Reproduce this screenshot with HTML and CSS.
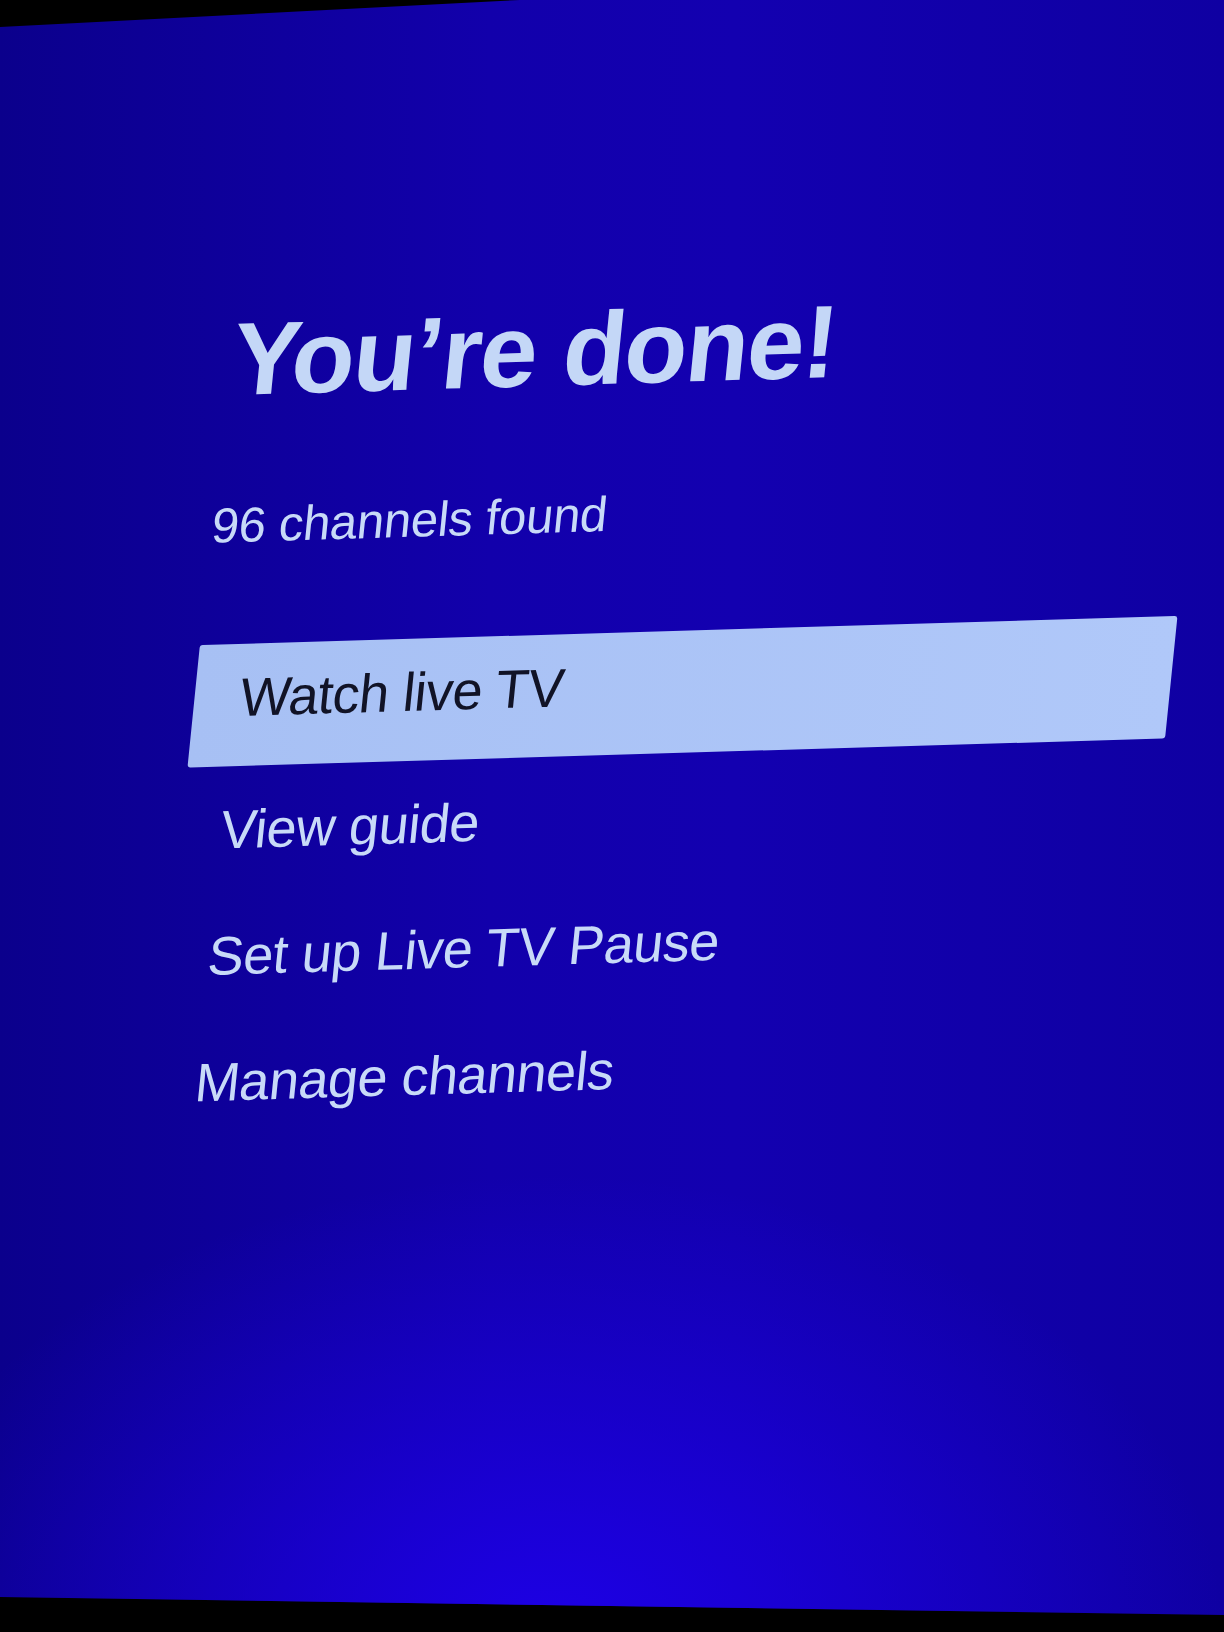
FILE: index.html
```html
<!DOCTYPE html>
<html lang="en">

<head>
    <meta charset="UTF-8">
    <meta name="viewport" content="width=device-width, initial-scale=1.0">
    <title>Live TV setup</title>
    <link rel="stylesheet" href="styles.css">
</head>

<body>

    <div class="screen">
        <div class="panel">
            <!-- Heading -->
            <h1 class="title">You’re done!</h1>
            <p class="status">96 channels found</p>

            <!-- Options -->
            <ul class="menu">
                <li class="menu-item is-focused">Watch live TV</li>
                <li class="menu-item">View guide</li>
                <li class="menu-item">Set up Live TV Pause</li>
                <li class="menu-item">Manage channels</li>
            </ul>
        </div>
    </div>

</body>

</html>
```

FILE: styles.css
```css
* {
    margin: 0;
    padding: 0;
    box-sizing: border-box;
}

body {
    width: 1224px;
    height: 1632px;
    overflow: hidden;
    background: #000;
    font-family: "Liberation Sans", Arial, sans-serif;
}

/* Blue TV screen, edges cut at an angle */
.screen {
    height: 1632px;
    overflow: hidden;
    background:
        radial-gradient(ellipse 55% 28% at 45% 100%, rgba(30, 0, 235, 0.9), rgba(30, 0, 235, 0) 100%),
        linear-gradient(to right, #0b008c 0%, #1200ab 40%, #1300b0 60%, #0f00a2 100%);
    clip-path: polygon(0 27px, 520px 0, 100% 0, 100% 1615px, 0 1597px);
}

.panel {
    padding: 317px 0 0 195px;
    transform-origin: 0 700px;
    transform: rotate(-1.7deg) skewX(-7.5deg);
}

.title {
    margin-left: 4px;
    font-size: 103px;
    line-height: 100px;
    font-weight: 700;
    letter-spacing: -1.5px;
    color: #c4d7f7;
}

.status {
    margin-top: 85px;
    font-size: 49px;
    line-height: 60px;
    letter-spacing: -0.3px;
    color: #c8daf8;
}

.menu {
    list-style: none;
    margin-top: 89px;
}

.menu-item {
    padding-left: 40px;
    font-size: 54px;
    line-height: 126px;
    letter-spacing: -0.5px;
    color: #c8daf8;
}

.menu-item.is-focused {
    width: 978px;
    height: 122px;
    padding-left: 46px;
    padding-bottom: 15px;
    line-height: 107px;
    border-radius: 3px;
    background: linear-gradient(to right, #a7c0f4, #b0c8f9);
    color: #111326;
}
```
